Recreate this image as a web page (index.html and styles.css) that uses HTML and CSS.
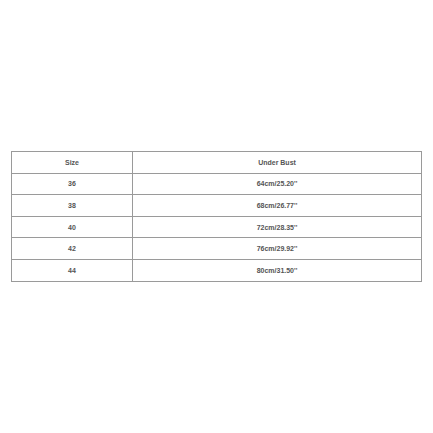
FILE: index.html
```html
<!DOCTYPE html>
<html>
<head>
<meta charset="utf-8">
<link rel="stylesheet" href="styles.css">
</head>
<body>
<div class="page">
<table class="chart">
<tr><td class="c1">Size</td><td>Under Bust</td></tr>
<tr><td class="c1">36</td><td>64cm/25.20''</td></tr>
<tr><td class="c1">38</td><td>68cm/26.77''</td></tr>
<tr><td class="c1">40</td><td>72cm/28.35''</td></tr>
<tr><td class="c1">42</td><td>76cm/29.92''</td></tr>
<tr><td class="c1">44</td><td>80cm/31.50''</td></tr>
</table>
</div>
</body>
</html>
```
FILE: styles.css
```css
html, body { margin: 0; padding: 0; background: #fff; }
.page { width: 433px; height: 433px; padding: 151px 0 0 11px; box-sizing: border-box; }
.chart {
  border-collapse: collapse;
  width: 411px;
  font-family: "Liberation Sans", Arial, sans-serif;
  font-size: 7px;
  font-weight: bold;
  color: #555;
}
.chart td {
  border: 1px solid #9a9a9a;
  height: 20.6px;
  padding: 0;
  text-align: center;
  vertical-align: middle;
}
.chart td.c1 { width: 120px; }
```
